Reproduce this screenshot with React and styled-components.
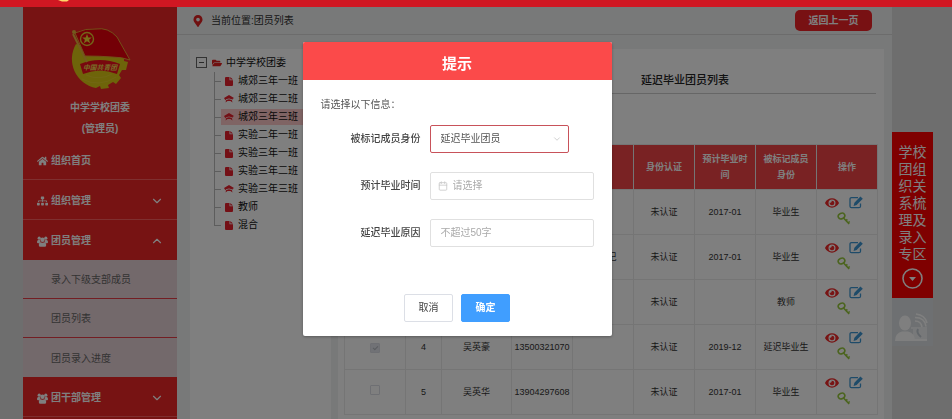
import React from "react";
import styled, { createGlobalStyle, css } from "styled-components";
import { FaHome, FaSitemap, FaEye, FaFolderOpen, FaMapMarkerAlt } from "react-icons/fa";
import { ChevronDown, ChevronUp, Calendar } from "lucide-react";

const GlobalStyle = createGlobalStyle`
  *, *::before, *::after { box-sizing: border-box; }
  body {
    margin: 0;
    background: #dcdcdc;
    color: #333;
    font: 10px/18px "Liberation Sans", "Noto Sans CJK SC", sans-serif;
  }
  button, input, select { font: inherit; color: inherit; }
  button { cursor: pointer; }
  ul { list-style: none; margin: 0; padding: 0; }
  a { color: inherit; text-decoration: none; }
`;

const Page = styled.div`
  min-height: 100vh;
  display: flex;
  flex-direction: column;
`;

const TopBar = styled.header`
  position: relative;
  z-index: 3;
  height: 7px;
  padding-left: 58px;
  background: #d01722;
  svg { display: block; }
`;

const Shell = styled.div`
  flex: 1;
  display: flex;
  padding-left: 23px;
`;

const Sidebar = styled.nav`
  width: 154px;
  flex: none;
  background: #ee2626;
  color: #fff;
  font-weight: bold;
`;

const Profile = styled.div`
  display: flex;
  flex-direction: column;
  align-items: center;
  height: 133px;
  padding-top: 20px;
  line-height: 21px;
  svg { margin-bottom: 6px; }
`;

const MenuLink = styled.a`
  display: flex;
  align-items: center;
  gap: 3px;
  height: 40px;
  padding: 3px 13px 0 14px;
  border-bottom: 1px solid ${(p) => (p.$open ? "transparent" : "#ff5f5f")};
  svg:first-child { width: 11px; }
  svg:nth-of-type(2) { margin-left: auto; }
`;

const SubLink = styled.a`
  display: flex;
  align-items: center;
  height: 39px;
  padding: 2px 0 0 28px;
  border-bottom: 1px solid #e63c46;
  background: #e6d2d6;
  color: #666;
  font-weight: normal;
  &:last-of-type { border-bottom: 0; }
`;

const Main = styled.main`
  flex: 1;
  min-width: 0;
  display: flex;
  flex-direction: column;
  background: #f1f2f3;
`;

const Crumbs = styled.div`
  display: flex;
  align-items: center;
  gap: 7px;
  height: 28px;
  padding: 0 20px 0 15px;
  border-bottom: 1px solid #d8d8d8;
  svg { color: #e02020; }
`;

const BackButton = styled.button`
  margin-left: auto;
  width: 77px;
  height: 21px;
  padding: 0;
  border: 0;
  border-radius: 5px;
  background: #f02226;
  color: #fff;
  font-weight: bold;
`;

const Columns = styled.div`
  flex: 1;
  display: flex;
  gap: 7px;
  padding: 14px 8px 0 13px;
`;

const Panel = styled.section`
  background: #fff;
`;

const TreePanel = styled(Panel)`
  flex: none;
  width: 141px;
  padding: 4px 0 0 6px;
`;

const TreeRoot = styled.div`
  display: flex;
  align-items: center;
  gap: 4px;
  height: 19px;
  color: #111;
  svg { color: #e02020; }
`;

const Toggle = styled.button`
  display: grid;
  place-items: center;
  width: 11px;
  height: 11px;
  margin-right: 1px;
  padding: 0;
  border: 1px solid #666;
  background: none;
  &::before { content: ""; width: 5px; height: 1px; background: #555; }
`;

const TreeItem = styled.li`
  display: flex;
  align-items: center;
  height: 18px;
  margin-left: 18px;
  color: #111;
  background: linear-gradient(#bbb, #bbb) 0 0 / 1px ${(p) => (p.$last ? "50%" : "100%")} no-repeat;
  &::before { content: ""; width: 7px; height: 1px; background: #bbb; }
`;

const TreeLabel = styled.a`
  flex: 1;
  display: flex;
  align-items: center;
  gap: 4px;
  height: 16px;
  padding-left: 3px;
  white-space: nowrap;
  ${(p) => p.$active && css`background: #ffc8c8;`}
`;

const ListPanel = styled(Panel)`
  flex: 1;
  min-width: 0;
  padding: 18px 8px 0 6px;
`;

const ListTitle = styled.h2`
  margin: 0 0 50px;
  padding: 0 147px 0 0;
  height: 27px;
  border-bottom: 1px solid #ccc;
  color: #222;
  font-size: 11px;
  font-weight: 500;
  line-height: 26px;
  text-align: right;
`;

const Table = styled.table`
  width: 100%;
  table-layout: fixed;
  border-collapse: collapse;
  font-size: 9px;
  line-height: 16px;
  text-align: center;
  th, td { padding: 0 5px; border: 1px solid #ebebeb; }
  td { height: 45px; padding: 0; }
  th { height: 45px; background: #f24446; color: #fff; font-weight: bold; }
`;

const Check = styled.input`
  appearance: none;
  display: inline-grid;
  place-items: center;
  width: 10px;
  height: 10px;
  margin: 0;
  border: 1px solid #dcdfe6;
  border-radius: 1px;
  &:checked::before {
    content: "";
    width: 3px;
    height: 5px;
    border: solid #b4b8c0;
    border-width: 0 1px 1px 0;
    transform: rotate(45deg);
  }
  &:checked { background: #e2e5ec; }
`;

const Actions = styled.div`
  display: flex;
  flex-wrap: wrap;
  justify-content: center;
  column-gap: 10px;
  row-gap: 2px;
  padding: 0 6px 3px 0;
`;

const IconButton = styled.button`
  display: grid;
  place-items: center;
  width: 14px;
  height: 14px;
  padding: 0;
  border: 0;
  background: none;
  color: ${(p) => p.$color};
`;

const Dock = styled.aside`
  width: 60px;
  flex: none;
  padding: 125px 19px 0 0;
`;

const DockLink = styled.a`
  display: flex;
  flex-direction: column;
  align-items: center;
  gap: 5px;
  padding: 12px 6px 9px;
  background: #ff0000;
  color: #fff;
  font-size: 14px;
  line-height: 17px;
  span { width: 28px; word-break: break-all; }
`;

const ContactLink = styled.a`
  display: block;
  padding: 14px 2px 2px;
  background: #dde1e4;
  svg { display: block; }
`;

const Overlay = styled.div`
  position: fixed;
  inset: 0;
  z-index: 2;
  display: flex;
  justify-content: center;
  align-items: flex-start;
  padding: 42px 38px 0 0;
  background: rgba(0, 0, 0, 0.5);
`;

const Dialog = styled.form`
  width: 309px;
  border-radius: 2px;
  overflow: hidden;
  background: #fff;
  box-shadow: 0 1px 3px rgba(0, 0, 0, 0.3);
`;

const DialogTitle = styled.h1`
  margin: 0;
  padding: 6px 0 0;
  background: #fb4a4a;
  color: #fff;
  font-size: 15px;
  line-height: 32px;
  text-align: center;
`;

const DialogBody = styled.div`
  padding: 16px 18px 14px;
`;

const Hint = styled.p`
  margin: 0 0 11px;
  color: #555;
`;

const Field = styled.div`
  display: grid;
  grid-template-columns: 100px minmax(0, 1fr);
  gap: 9px;
  align-items: center;
  margin-bottom: 19px;
  label { text-align: right; color: #444; font-weight: 500; }
`;

const Control = styled.div`
  display: flex;
  align-items: center;
  height: 28px;
  width: ${(p) => (p.$select ? "139px" : "auto")};
  padding: 0 ${(p) => (p.$select ? 6 : 10)}px 0 ${(p) => (p.$icon ? 7 : 10)}px;
  gap: 5px;
  border: 1px solid ${(p) => (p.$select ? "#c8525a" : "#e0e0e0")};
  border-radius: 2px;
  svg { flex: none; color: #c8c8c8; }
  input, select {
    flex: 1;
    min-width: 0;
    padding: 0;
    border: 0;
    outline: 0;
    appearance: none;
    background: none;
    color: #555;
  }
  input::placeholder { color: #aaa; }
`;

const Buttons = styled.div`
  display: flex;
  justify-content: center;
  gap: 8px;
  padding-top: 28px;
`;

const Button = styled.button`
  width: 49px;
  height: 28px;
  padding: 0;
  border: 1px solid ${(p) => (p.$primary ? "#409eff" : "#dcdfe6")};
  border-radius: 2px;
  background: ${(p) => (p.$primary ? "#409eff" : "#fff")};
  color: ${(p) => (p.$primary ? "#fff" : "#444")};
  font-weight: ${(p) => (p.$primary ? "bold" : "normal")};
`;

const Emblem = () => (
  <svg width="64" height="64" viewBox="0 0 64 64" role="img" aria-label="团徽">
    <path
      fill="#dcc814"
      d="M8 17A29.5 29.5 0 0 0 28 61l4-2 1 3 8-1-1-3 5-3 3 2 5-6-2-3 3-5 4 0 2-8-4-1V31z"
    />
    <path fill="none" stroke="#f0d84a" d="M14 52q17 9 34-2M18 48q13 6 26-1" opacity=".35" />
    <path fill="#f0101c" d="M12 37Q32 29 52 37l-3 10Q32 40 15 47z" />
    <text x="15" y="43" fontSize="6.8" fill="#f0dc50" fontStyle="italic" fontWeight="bold">中国共青团</text>
    <path d="M5 7l14 28" stroke="#e6b43c" strokeWidth="2" />
    <path
      fill="#e8000c"
      stroke="#e6a030"
      d="M7 6Q18 1 28 2q12-2 21 8l13 23q-8-3-18-3-12-1-27-1z"
    />
    <circle cx="6" cy="5" r="2" fill="#e6b43c" />
    <circle cx="19" cy="12" r="6.5" fill="none" stroke="#e6c832" strokeWidth="1.4" />
    <path fill="#f0dc32" d="M19 7l1.3 3.4 3.5.1-2.7 2.2 1 3.5-3.100-2-3.100 2 1-3.500-2.700-2.200 3.500-.1z" />
  </svg>
);

const GroupIcon = () => (
  <svg width="11" height="11" viewBox="0 0 11 11" fill="#fff" aria-hidden="true">
    <circle cx="2.2" cy="2.2" r="1.6" />
    <circle cx="8.8" cy="2.200" r="1.6" />
    <circle cx="5.5" cy="3.800" r="2.200" />
    <path d="M0 6q0-2 1.500-2h1.300q.2 1.500 1 2.300L2 7.200H1Q0 7.200 0 6zM11 6q0-2-1.500-2H8.200Q8 5.500 7.200 6.300L9 7.200h1q1 0 1-1.200z" />
    <path d="M1.800 9.200q0-3 2.200-3 1.500 1 3 0 2.200 0 2.200 3 0 1.500-1.500 1.500H3.300q-1.500 0-1.500-1.500z" />
  </svg>
);

const FileIcon = () => (
  <svg width="10" height="9" viewBox="0 0 10 9" fill="#e8202c" aria-hidden="true">
    <path d="M1 1q0-1 1-1h3.500v3.300H9V8q0 1-1 1H2Q1 9 1 8zM6.300 0L9 2.600H6.300z" />
  </svg>
);

const CapIcon = () => (
  <svg width="10" height="8" viewBox="0 0 10 8" fill="#e8202c" aria-hidden="true">
    <path d="M5 0l5 3-1.500 1v1.500L8 4.300 5 3.400 2 4.300 1.500 5.500 0 3zM2.200 5L5 4.200 7.800 5 8.500 7.500 6.500 6h-3L1.500 7.500z" />
  </svg>
);

const EditIcon = () => (
  <svg width="14" height="13" viewBox="0 0 14 13" fill="none" stroke="currentColor" aria-hidden="true">
    <path strokeWidth="1.3" d="M9 1.700H2.500Q1 1.700 1 3.200v7Q1 11.700 2.500 11.700h7.500q1.500 0 1.500-1.500V7.500" />
    <path fill="currentColor" stroke="none" d="M11.400 0.500l2.400 2.200-6.200 6.300-3 .9.800-3.200z" />
  </svg>
);

const KeyIcon = () => (
  <svg width="14" height="13" viewBox="0 0 14 13" fill="none" stroke="currentColor" strokeWidth="1.600" aria-hidden="true">
    <ellipse cx="4.500" cy="4" rx="3.400" ry="2.700" transform="rotate(-25 4.5 4)" />
    <path d="M6.500 6l5.700 6M8.700 8.800l1.700-1.500M11 11l1.700-1.500" />
  </svg>
);

const ContactIcon = () => (
  <svg width="34" height="32" viewBox="0 0 34 32" fill="#fff" aria-hidden="true">
    <path d="M17 15h16v13H19V17h-2z" opacity=".6" />
    <ellipse cx="11" cy="11" rx="6" ry="7.500" />
    <path d="M1 29q0-8 7-9.500h6q7 1.500 7 9.500z" />
    <path fill="none" stroke="#fff" strokeWidth="1.600" d="M21 9q6 0 7 6M21 5.500q10 0 11 9M22 2q9 1 11 9" />
    <path fill="none" stroke="#c4ccd4" strokeWidth="2" d="M24 17q-2 4 3 8" />
    <path d="M18 27h15v2H18z" />
  </svg>
);

const tree = [
  ["城郊三年一班", "file"],
  ["城郊三年二班", "cap"],
  ["城郊三年三班", "cap"],
  ["实验二年一班", "file"],
  ["实验三年一班", "file"],
  ["实验三年二班", "file"],
  ["实验三年三班", "cap"],
  ["教师", "file"],
  ["混合", "file"],
];

const rows = [
  { date: "2017-01", status: "毕业生" },
  { post: "副书记", date: "2017-01", status: "毕业生" },
  { status: "教师" },
  { number: 4, name: "吴英豪", phone: "13500321070", date: "2019-12", status: "延迟毕业生", checked: true },
  { number: 5, name: "吴英华", phone: "13904297608", date: "2017-01", status: "毕业生" },
];

const columns = [61, 36, 70, 61, 61, 61, 61, 61, 61];
const headings = ["", "", "", "", "", "身份认证", "预计毕业时间", "被标记成员身份", "操作"];

export default function App() {
  return (
    <Page>
      <GlobalStyle />
      <TopBar>
        <svg width="14" height="2" viewBox="0 0 14 2" aria-hidden="true">
          <path fill="#ffd76a" d="M0 0h11l-2 1.500H4z" />
        </svg>
      </TopBar>
      <Shell>
        <Sidebar>
          <Profile>
            <Emblem />
            <div>中学学校团委</div>
            <div>(管理员)</div>
          </Profile>
          <MenuLink href="#home"><FaHome size={10} />组织首页</MenuLink>
          <MenuLink href="#org">
            <FaSitemap size={10} />组织管理<ChevronDown size={14} strokeWidth={2} />
          </MenuLink>
          <MenuLink href="#members" $open>
            <GroupIcon />团员管理<ChevronUp size={14} strokeWidth={2} />
          </MenuLink>
          <div>
            <SubLink href="#entry">录入下级支部成员</SubLink>
            <SubLink href="#list">团员列表</SubLink>
            <SubLink href="#progress">团员录入进度</SubLink>
          </div>
          <MenuLink href="#cadres">
            <GroupIcon />团干部管理<ChevronDown size={14} strokeWidth={2} />
          </MenuLink>
        </Sidebar>
        <Main>
          <Crumbs>
            <FaMapMarkerAlt size={12} />
            <span>当前位置:团员列表</span>
            <BackButton type="button">返回上一页</BackButton>
          </Crumbs>
          <Columns>
            <TreePanel>
              <TreeRoot>
                <Toggle type="button" aria-label="收起" />
                <FaFolderOpen size={10} />
                中学学校团委
              </TreeRoot>
              <ul>
                {tree.map(([label, icon], i) => (
                  <TreeItem key={label} $last={i === tree.length - 1}>
                    <TreeLabel href={`#class-${i}`} $active={i === 2}>
                      {icon === "file" ? <FileIcon /> : <CapIcon />}
                      {label}
                    </TreeLabel>
                  </TreeItem>
                ))}
              </ul>
            </TreePanel>
            <ListPanel>
              <ListTitle>延迟毕业团员列表</ListTitle>
              <Table>
                <colgroup>
                  {columns.map((w, i) => <col key={i} width={w} />)}
                </colgroup>
                <thead>
                  <tr>{headings.map((h, i) => <th key={i} scope="col">{h}</th>)}</tr>
                </thead>
                <tbody>
                  {rows.map((r, i) => (
                    <tr key={i}>
                      <td>
                        <Check type="checkbox" aria-label={`选择第${i + 1}行`} defaultChecked={r.checked} />
                      </td>
                      <td>{r.number}</td>
                      <td>{r.name}</td>
                      <td>{r.phone}</td>
                      <td>{r.post}</td>
                      <td>未认证</td>
                      <td>{r.date}</td>
                      <td>{r.status}</td>
                      <td>
                        <Actions>
                          <IconButton type="button" aria-label="查看" $color="#f02828"><FaEye size={14} /></IconButton>
                          <IconButton type="button" aria-label="编辑" $color="#3c96d2"><EditIcon /></IconButton>
                          <IconButton type="button" aria-label="授权" $color="#96c83c"><KeyIcon /></IconButton>
                        </Actions>
                      </td>
                    </tr>
                  ))}
                </tbody>
              </Table>
            </ListPanel>
          </Columns>
        </Main>
        <Dock>
          <DockLink href="#transfer">
            <span>学校团组织关系梳理及录入专区</span>
            <svg width="21" height="21" viewBox="0 0 21 21" aria-hidden="true">
              <circle cx="10.5" cy="10.5" r="9.5" fill="none" stroke="#fff" strokeWidth="1.600" />
              <path d="M7 9h7l-3.500 4z" fill="#fff" />
            </svg>
          </DockLink>
          <ContactLink href="#contact" aria-label="联系客服"><ContactIcon /></ContactLink>
        </Dock>
      </Shell>
      <Overlay>
        <Dialog role="dialog" aria-labelledby="dialog-title" onSubmit={(e) => e.preventDefault()}>
          <DialogTitle id="dialog-title">提示</DialogTitle>
          <DialogBody>
            <Hint>请选择以下信息：</Hint>
            <Field>
              <label htmlFor="identity">被标记成员身份</label>
              <Control $select>
                <select id="identity" defaultValue="delayed">
                  <option value="delayed">延迟毕业团员</option>
                </select>
                <ChevronDown size={10} strokeWidth={2} />
              </Control>
            </Field>
            <Field>
              <label htmlFor="graduation">预计毕业时间</label>
              <Control $icon>
                <Calendar size={10} strokeWidth={2} />
                <input id="graduation" type="text" placeholder="请选择" />
              </Control>
            </Field>
            <Field>
              <label htmlFor="reason">延迟毕业原因</label>
              <Control>
                <input id="reason" type="text" placeholder="不超过50字" />
              </Control>
            </Field>
            <Buttons>
              <Button type="button">取消</Button>
              <Button type="submit" $primary>确定</Button>
            </Buttons>
          </DialogBody>
        </Dialog>
      </Overlay>
    </Page>
  );
}
